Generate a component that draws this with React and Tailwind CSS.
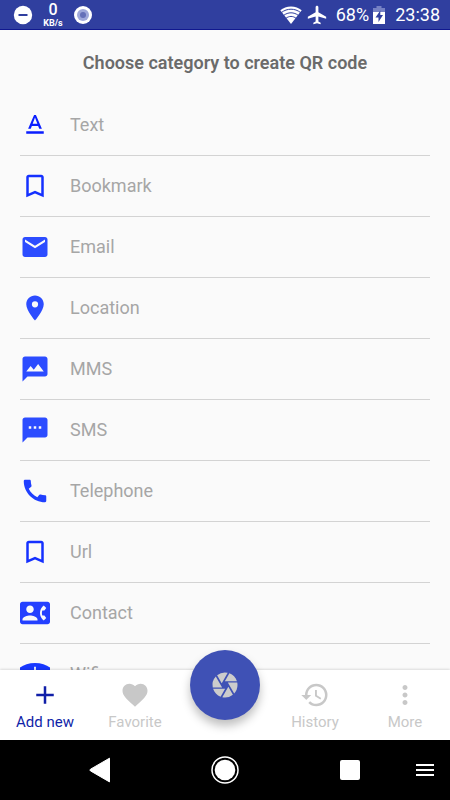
import {
  MdAdd,
  MdAirplanemodeActive,
  MdBookmarkBorder,
  MdCall,
  MdCamera,
  MdEmail,
  MdFavorite,
  MdHistory,
  MdMms,
  MdMoreVert,
  MdPlace,
  MdSms,
  MdTextFormat,
} from 'react-icons/md'

function ContactPhoneIcon({ className }) {
  return (
    <svg viewBox="0 0 24 24" fill="currentColor" className={className} aria-hidden="true">
      <path d="M22 3H2C.9 3 0 3.9 0 5v14c0 1.100.9 2 2 2h20c1.100 0 2-.9 2-2V5c0-1.100-.9-2-2-2zM8 6c1.660 0 3 1.340 3 3s-1.340 3-3 3-3-1.340-3-3 1.340-3 3-3zm6 12H2v-1c0-2 4-3.100 6-3.100s6 1.100 6 3.100v1zm3.850-4h1.640L21 16l-1.990 1.990c-1.310-.98-2.280-2.380-2.730-3.990-.18-.64-.28-1.310-.28-2s.1-1.360.28-2c.45-1.620 1.420-3.010 2.730-3.990L21 8l-1.510 2h-1.640c-.22.630-.35 1.300-.35 2s.13 1.370.35 2z" />
    </svg>
  )
}

function ScanWifiIcon({ className }) {
  return (
    <svg viewBox="0 0 24 24" fill="currentColor" className={className} aria-hidden="true">
      <path d="M12 3.200C7 3.200 3 4.600 0 6.800V9l12 13L24 9V6.800C21 4.600 17 3.200 12 3.200z" />
      <path d="M11.300 6.200h1.400v10h-1.400z" fill="#fafafa" />
    </svg>
  )
}

const categories = [
  { label: 'Text', icon: MdTextFormat, color: 'text-[#0a1eff]' },
  { label: 'Bookmark', icon: MdBookmarkBorder, color: 'text-[#1430ff]' },
  { label: 'Email', icon: MdEmail, color: 'text-[#2c4cff]' },
  { label: 'Location', icon: MdPlace, color: 'text-[#2c4cff]' },
  { label: 'MMS', icon: MdMms, color: 'text-[#2c4cff]' },
  { label: 'SMS', icon: MdSms, color: 'text-[#2c4cff]' },
  { label: 'Telephone', icon: MdCall, color: 'text-[#1f3fff]' },
  { label: 'Url', icon: MdBookmarkBorder, color: 'text-[#1430ff]' },
  { label: 'Contact', icon: ContactPhoneIcon, color: 'text-[#2440ff]' },
  { label: 'Wifi', icon: ScanWifiIcon, color: 'text-[#1838ff]' },
]

function StatusBar() {
  return (
    <header className="flex h-[30px] shrink-0 items-center justify-between border-b border-[#10188f] bg-[#303f9f] pr-2.5 pl-[13px] text-white">
      <div className="flex items-center">
        <svg viewBox="0 0 20 20" className="size-5" aria-hidden="true">
          <circle cx="10" cy="10" r="9.2" fill="#fff" />
          <path d="M5.5 9h9v2h-9z" fill="#303f9f" />
        </svg>
        <div className="ml-2 flex w-6 flex-col items-center">
          <span className="text-base leading-4 font-medium">0</span>
          <span className="text-[9px] leading-[10px] font-bold">KB/s</span>
        </div>
        <svg viewBox="0 0 20 20" className="ml-2 size-5" aria-hidden="true">
          <circle cx="10" cy="10" r="9" fill="#fff" />
          <circle cx="10" cy="10" r="6" fill="#9fa8da" />
          <circle cx="10" cy="10" r="3" fill="#6570b8" />
        </svg>
      </div>
      <div className="flex items-center">
        <svg viewBox="0 0 22 18" className="h-[18px] w-[22px]" aria-hidden="true">
          <path d="M11 18 .3 4.2C3.200 1.900 6.900.5 11 .5s7.800 1.400 10.700 3.700z" fill="#fff" />
          <g fill="none" stroke="#303f9f" strokeWidth="1">
            <path d="M1.500 6.500c5.500-4.400 13.500-4.400 19 0" />
            <path d="M3.600 9.500c4.300-3.600 10.500-3.600 14.800 0" />
            <path d="M6 12.300c3-2.500 7-2.500 10 0" />
          </g>
        </svg>
        <MdAirplanemodeActive className="ml-1 size-[22px]" />
        <span className="ml-2 text-lg leading-7">68%</span>
        <svg viewBox="0 0 12 18" className="ml-1 h-[18px] w-3" aria-hidden="true">
          <path d="M3.500 0h5v2H12v5H0V2h3.500z" fill="#7681c4" />
          <path d="M0 6h12v12H0z" fill="#fff" />
          <path d="M7.300 4.500 2.500 11.500h3v4.500l4.500-7H7.300z" fill="#303f9f" />
        </svg>
        <span className="ml-2.5 text-lg leading-7">23:38</span>
      </div>
    </header>
  )
}

function NavItem({ icon: Icon, label, active }) {
  return (
    <button
      type="button"
      className={`flex flex-1 flex-col items-center pt-2.5 ${active ? 'text-[#101fa8]' : 'text-[#c8c8c8]'}`}
    >
      <Icon className="size-[30px]" />
      <span className="text-[15px] leading-6">{label}</span>
    </button>
  )
}

function BottomNav() {
  return (
    <nav className="relative z-10 flex h-[70px] shrink-0 bg-white shadow-[0_-1px_2px_rgba(0,0,0,0.12)]">
      <NavItem icon={MdAdd} label="Add new" active />
      <NavItem icon={MdFavorite} label="Favorite" />
      <div className="flex flex-1 justify-center">
        <button
          type="button"
          aria-label="Scan"
          className="-mt-5 flex size-[70px] items-center justify-center rounded-full bg-[#3f51b5] text-[#cccccc] shadow-[0_6px_10px_rgba(0,0,0,0.25)]"
        >
          <MdCamera className="size-[30px]" />
        </button>
      </div>
      <NavItem icon={MdHistory} label="History" />
      <NavItem icon={MdMoreVert} label="More" />
    </nav>
  )
}

function SystemBar() {
  return (
    <footer className="grid h-[60px] shrink-0 grid-cols-[3fr_10fr_10fr_10fr_3fr] items-center bg-black text-white">
      <button type="button" aria-label="Back" className="col-start-2 flex justify-center">
        <svg viewBox="0 0 22 26" className="h-[26px] w-[22px]" fill="currentColor">
          <path d="M20.500 1.200 1.500 12.200a1 1 0 0 0 0 1.700l19 11z" stroke="currentColor" strokeLinejoin="round" />
        </svg>
      </button>
      <button type="button" aria-label="Home" className="flex justify-center">
        <svg viewBox="0 0 28 28" className="size-7" fill="currentColor">
          <circle cx="14" cy="14" r="13" fill="none" stroke="currentColor" strokeWidth="1.500" />
          <circle cx="14" cy="14" r="10.300" />
        </svg>
      </button>
      <button type="button" aria-label="Recent apps" className="flex justify-center">
        <span className="size-5 rounded-xs bg-white" />
      </button>
      <button type="button" aria-label="Menu" className="flex justify-end pr-4">
        <svg viewBox="0 0 18 12" className="h-3 w-[18px]" fill="currentColor">
          <path d="M0 0h18v2H0zM0 5h18v2H0zM0 10h18v2H0z" />
        </svg>
      </button>
    </footer>
  )
}

export default function App() {
  return (
    <div className="flex h-screen flex-col bg-[#fafafa] font-[Roboto,sans-serif]">
      <StatusBar />
      <main className="min-h-0 flex-1 overflow-hidden px-5">
        <h1 className="pt-[21px] pb-5 text-center text-lg leading-6 font-semibold text-[#6b6b6b]">
          Choose category to create QR code
        </h1>
        <ul>
          {categories.map(({ label, icon: Icon, color }) => (
            <li key={label} className="border-b border-[#d3d3d3]">
              <button type="button" className="flex h-[60px] w-full items-center gap-5 text-left">
                <Icon className={`size-[30px] shrink-0 ${color}`} />
                <span className="text-lg leading-6 text-[#a6a6a6]">{label}</span>
              </button>
            </li>
          ))}
        </ul>
      </main>
      <BottomNav />
      <SystemBar />
    </div>
  )
}
